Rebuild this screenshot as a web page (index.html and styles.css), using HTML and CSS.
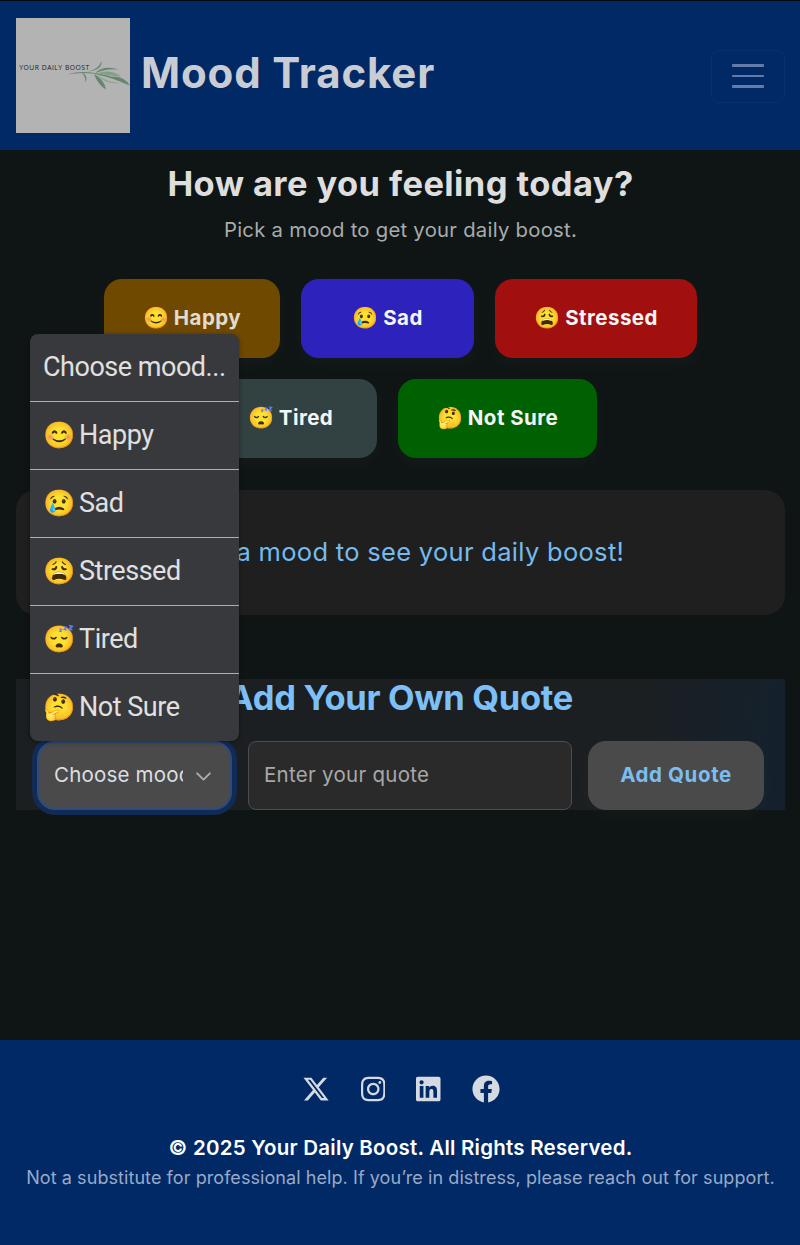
FILE: index.html
```html
<!DOCTYPE html>
<html lang="en">
<head>
<meta charset="utf-8">
<title>Mood Tracker</title>
<link rel="stylesheet" href="styles.css">
</head>
<body>
<header class="site-header">
  <svg class="logo" viewBox="0 0 114 115">
    <rect width="114" height="115" fill="#b3b3b3"/>
    <text x="3.3" y="52.300" class="logo-text" textLength="70" lengthAdjust="spacing">YOUR DAILY BOOST</text>
    <g fill="#66876e">
      <path d="M51 56.500 Q63 52.800 77 54.700 L84 56 Q100 58 114 67.500 Q98 60.500 84 57.300 L77 55.600 Q63 54 51 56.500Z"/>
      <path d="M72 53.500 Q83 51 85.500 43 Q86.500 52 72 53.500Z"/>
      <path d="M79 55 Q88 46.500 103 51.500 Q91 50 79 55Z"/>
      <path d="M81 55.500 Q94 50.500 105 58.500 Q93 57.500 81 55.500Z" fill="#81a088"/>
      <path d="M96 58.500 Q108 58 114 67.500 Q104 64 96 58.500Z"/>
      <path d="M78 56 Q88 61 90 71.500 Q82 67 78 56Z"/>
      <path d="M82 57 Q90 64.500 104 65 Q90 67 82 57Z" fill="#81a088"/>
      <path d="M65 54.500 Q73 57 69.500 64.500 Q69.500 57.500 65 54.500Z"/>
    </g>
  </svg>
  <h1 class="brand">Mood Tracker</h1>
  <button class="toggler" aria-label="Menu"><span></span><span></span><span></span></button>
</header>
<main class="page">
  <h2 class="title">How are you feeling today?</h2>
  <p class="subtitle">Pick a mood to get your daily boost.</p>
  <div class="moods">
    <button class="mood happy"><span class="emo">😊</span><span>Happy</span></button>
    <button class="mood sad"><span class="emo">😢</span><span>Sad</span></button>
    <button class="mood stressed"><span class="emo">😩</span><span>Stressed</span></button>
    <button class="mood tired"><span class="emo">😴</span><span>Tired</span></button>
    <button class="mood unsure"><span class="emo">🤔</span><span>Not Sure</span></button>
  </div>
  <div class="quote-card">Pick a mood to see your daily boost!</div>
  <section class="add">
    <h2 class="add-title">Add Your Own Quote</h2>
    <div class="form">
      <div class="select-wrap">
        <div class="select"><span class="select-text">Choose mood...</span>
          <svg class="chevron" viewBox="0 0 16 16"><path d="M2 5l6 6 6-6" fill="none" stroke="#a9adb1" stroke-width="1.800" stroke-linecap="round" stroke-linejoin="round"/></svg>
        </div>
        <ul class="menu">
          <li><span>Choose mood...</span></li>
          <li><span class="emo">😊</span><span>Happy</span></li>
          <li><span class="emo">😢</span><span>Sad</span></li>
          <li><span class="emo">😩</span><span>Stressed</span></li>
          <li><span class="emo">😴</span><span>Tired</span></li>
          <li><span class="emo">🤔</span><span>Not Sure</span></li>
        </ul>
      </div>
      <div class="input">Enter your quote</div>
      <button class="submit">Add Quote</button>
    </div>
  </section>
</main>
<footer class="footer">
  <div class="social">
    <svg width="28" height="28" viewBox="0 0 512 512"><path d="M389.2 48h70.6L305.6 224.2 487 464H345L233.7 318.6 106.5 464H35.8L200.7 275.5 26.8 48H172.4L272.9 180.9 389.2 48zM364.4 421.8h39.1L151.1 88h-42L364.400 421.800z"/></svg>
    <svg width="24.5" height="28" viewBox="0 0 448 512"><path d="M224.100 141c-63.600 0-114.900 51.300-114.900 114.900s51.300 114.900 114.900 114.900S339 319.500 339 255.900 287.700 141 224.100 141zm0 189.600c-41.100 0-74.700-33.500-74.700-74.700s33.500-74.700 74.700-74.700 74.700 33.500 74.700 74.700-33.600 74.700-74.700 74.700zm146.400-194.300c0 14.900-12 26.800-26.800 26.800-14.900 0-26.800-12-26.800-26.800s12-26.800 26.800-26.800 26.800 12 26.800 26.800zm76.100 27.200c-1.700-35.900-9.900-67.700-36.200-93.900-26.200-26.200-58-34.400-93.900-36.200-37-2.100-147.900-2.100-184.900 0-35.800 1.700-67.600 9.900-93.900 36.100s-34.400 58-36.200 93.900c-2.100 37-2.100 147.900 0 184.900 1.700 35.900 9.900 67.700 36.200 93.900s58 34.400 93.900 36.200c37 2.100 147.900 2.100 184.900 0 35.900-1.700 67.700-9.900 93.900-36.200 26.200-26.200 34.400-58 36.200-93.900 2.100-37 2.100-147.800 0-184.800zM398.800 388c-7.800 19.600-22.900 34.700-42.600 42.600-29.500 11.700-99.500 9-132.100 9s-102.700 2.600-132.100-9c-19.600-7.800-34.700-22.900-42.600-42.600-11.700-29.500-9-99.500-9-132.100s-2.600-102.700 9-132.100c7.800-19.600 22.900-34.700 42.600-42.600 29.500-11.700 99.500-9 132.100-9s102.700-2.600 132.100 9c19.600 7.800 34.700 22.900 42.600 42.600 11.700 29.500 9 99.500 9 132.100s2.700 102.700-9 132.100z"/></svg>
    <svg width="24.5" height="28" viewBox="0 0 448 512"><path d="M416 32H31.900C14.300 32 0 46.500 0 64.300v383.400C0 465.500 14.300 480 31.900 480H416c17.600 0 32-14.500 32-32.300V64.300c0-17.800-14.400-32.300-32-32.300zM135.400 416H69V202.200h66.500V416zm-33.200-243c-21.300 0-38.500-17.300-38.500-38.500S80.900 96 102.200 96c21.200 0 38.500 17.300 38.500 38.500 0 21.300-17.200 38.500-38.500 38.500zm282.100 243h-66.400V312c0-24.800-.5-56.700-34.500-56.700-34.600 0-39.900 27-39.900 54.900V416h-66.400V202.200h63.700v29.200h.9c8.900-16.800 30.600-34.500 62.900-34.500 67.200 0 79.700 44.300 79.700 101.900V416z"/></svg>
    <svg width="28" height="28" viewBox="0 0 512 512"><path d="M504 256C504 119 393 8 256 8S8 119 8 256c0 123.780 90.690 226.380 209.250 245V327.690h-63V256h63v-54.640c0-62.150 37-96.480 93.670-96.480 27.140 0 55.520 4.840 55.520 4.840v61h-31.280c-30.800 0-40.410 19.120-40.410 38.730V256h68.780l-11 71.690h-57.780V501C413.310 482.380 504 379.780 504 256z"/></svg>
  </div>
  <p class="copy">© 2025 Your Daily Boost. All Rights Reserved.</p>
  <p class="note">Not a substitute for professional help. If you’re in distress, please reach out for support.</p>
</footer>
</body>
</html>
```
FILE: styles.css
```css
* { box-sizing: border-box; margin: 0; padding: 0; }
body {
  display: flex; flex-direction: column; width: 800px; height: 1245px; overflow: hidden;
  background: #0f1515; color: #d8d8d8; font-family: Inter, "Noto Sans", sans-serif;
}
button { border: 0; font-family: inherit; }
h1, h2, p, button, .quote-card, .select, .input { white-space: nowrap; }

.site-header {
  display: flex; align-items: center; height: 150px; padding: 0 15px 0 16px;
  background: #002966; border-top: 1px solid #020610;
}
.logo { width: 114px; height: 115px; margin-top: -1px; }
.logo-text { font: 6.800px "Open Sans", sans-serif; fill: #222; }
.brand { margin: -5px auto 0 11px; font-size: 42px; line-height: 54px; font-weight: 700; letter-spacing: .85px; color: #c9cdd3; }
.toggler {
  display: flex; flex-direction: column; align-items: center; justify-content: center; gap: 8.200px;
  width: 74px; height: 53px; margin-top: 1px; border: 1px solid #08306b; border-radius: 8px; background: none;
}
.toggler span { width: 32px; height: 2.600px; border-radius: 1px; background: #657caa; }

.page { flex: 1; padding: 0 15px 0 16px; text-align: center; }
.title { margin-top: 12px; font-size: 34.500px; line-height: 44px; font-weight: 700; letter-spacing: .4px; color: #dedede; }
.subtitle { margin-top: 8px; font-size: 20.300px; line-height: 32px; letter-spacing: .26px; color: #a9acac; }
.moods { display: flex; flex-wrap: wrap; justify-content: center; gap: 21px; margin-top: 33px; }
.mood {
  display: flex; align-items: center; justify-content: center; gap: 5px; height: 79px; padding-bottom: 2px; border-radius: 18px;
  color: #f5f5f5; font-size: 20.500px; font-weight: 700; letter-spacing: .45px; box-shadow: 0 6px 20px #ffffff08;
}
.mood .emo { font-size: 21px; letter-spacing: 0; }
.happy { width: 176px; background: #704900; color: #e2dccf; }
.sad { width: 173px; background: #2d22bc; }
.stressed { width: 202px; background: #a10f0f; }
.tired { width: 173px; background: #324141; }
.unsure { width: 199px; background: #006100; }
.quote-card {
  display: flex; align-items: center; justify-content: center; height: 125px; margin-top: 32px;
  padding-bottom: 3px; border-radius: 20px; background: #1f1f1f; color: #75bbef; font-size: 25.500px; letter-spacing: .3px;
}
.add { height: 131px; margin-top: 64px; background: linear-gradient(100deg, #1b1f22 80%, #14212c 97%); }
.add-title { font-size: 34.500px; line-height: 38px; font-weight: 700; letter-spacing: -.33px; color: #7cc0f7; }
.form { display: flex; gap: 16px; margin-top: 24px; padding: 0 21px; }
.select-wrap { position: relative; width: 195px; }
.select {
  display: flex; align-items: center; gap: 12px; height: 69px; padding: 0 17px 2px 15px; text-align: left;
  border: 2px solid #2e4b7b; border-radius: 18px; background: #4a4a4a; box-shadow: 0 0 0 5px #122b54;
  font-size: 20.500px; letter-spacing: .2px; color: #dcdee0;
}
.select-text { width: 129px; overflow: hidden; }
.chevron { flex: none; width: 17px; height: 17px; margin-top: 3px; }
.menu {
  position: absolute; left: -7px; top: -407px; width: 209px; list-style: none; overflow: hidden;
  border-radius: 8px; background: #38393c; box-shadow: 0 1px 5px #0006; color: #e0e0e0;
  font-family: Roboto, sans-serif; font-size: 27px; letter-spacing: -.48px;
}
.menu li { display: flex; align-items: center; gap: 4.500px; height: 68px; padding: 0 0 2px 13px; border-bottom: 1px solid #adaeaf; white-space: nowrap; }
.menu li:last-child { height: 67px; border-bottom: 0; }
.menu .emo { font-size: 26px; }
.input {
  display: flex; align-items: center; width: 324px; height: 69px; padding: 0 0 2px 15px; border: 1px solid #4b4e52;
  border-radius: 8px; background: #2a2a2a; color: #a8a8a8; font-size: 20.500px; letter-spacing: .28px;
}
.submit { width: 176px; height: 69px; padding-bottom: 2px; border-radius: 18px; background: #4a4a4a; color: #7cbdf0; font-size: 20.500px; letter-spacing: .6px; font-weight: 700; box-shadow: 0 6px 20px #ffffff08; }

.footer { height: 205px; padding: 35px 0 0 1px; background: #002966; text-align: center; }
.social { display: flex; justify-content: center; gap: 31px; height: 28px; fill: #d5dae2; }
.copy { margin-top: 29px; font-size: 20.500px; line-height: 32px; font-weight: 600; letter-spacing: .23px; color: #fff; }
.note { font-size: 18px; line-height: 28px; letter-spacing: .07px; color: #99a9c7; }
```
